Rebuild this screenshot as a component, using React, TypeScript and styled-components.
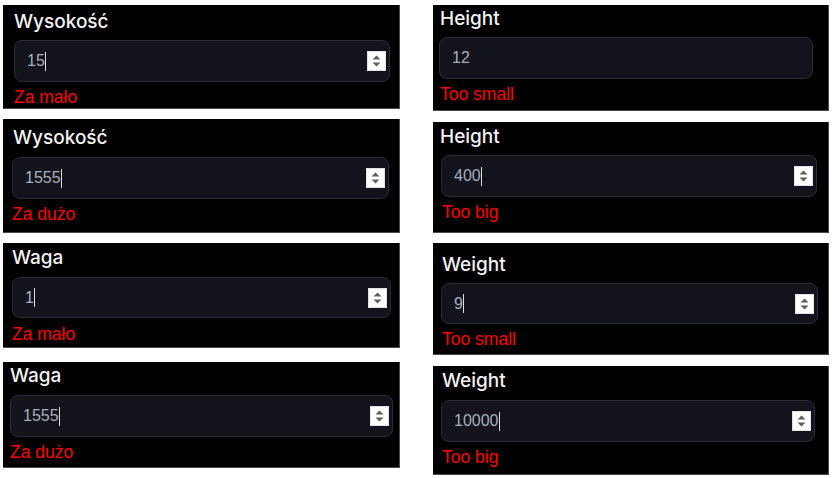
import React from "react";
import styled, { createGlobalStyle } from "styled-components";

const Global = createGlobalStyle`
  html, body { margin: 0; padding: 0; background: #ffffff; }
  body { font-family: Inter, "Liberation Sans", sans-serif; }
`;

const Page = styled.div`
  display: grid;
  grid-template-columns: 397px 396px;
  column-gap: 33px;
  padding: 5px 0 0 3px;
  align-items: start;
`;

const Column = styled.div`
  display: flex;
  flex-direction: column;
`;

const Panel = styled.section<{
  $h: number;
  $mt: number;
  $padL: number;
  $padT: number;
}>`
  box-sizing: border-box;
  height: ${(p) => p.$h}px;
  margin-top: ${(p) => p.$mt}px;
  padding: ${(p) => p.$padT}px 0 0 ${(p) => p.$padL}px;
  background: #000000;
  border-right: 1px solid #4a4a4a;
  border-bottom: 1px solid #4a4a4a;
  display: flex;
  flex-direction: column;
  align-items: flex-start;
  overflow: hidden;
`;

const Label = styled.div<{ $mb: number }>`
  font-family: Inter, "Noto Sans", sans-serif;
  font-size: 19px;
  font-weight: 500;
  line-height: 24px;
  color: #f2f2f2;
  margin-bottom: ${(p) => p.$mb}px;
`;

const Field = styled.div<{ $w: number; $h: number; $ml: number }>`
  box-sizing: border-box;
  width: ${(p) => p.$w}px;
  height: ${(p) => p.$h}px;
  margin-left: ${(p) => p.$ml}px;
  background: #13131b;
  border: 1px solid #2c2c38;
  border-radius: 8px;
  display: flex;
  align-items: center;
  padding: 0 3px 0 12px;
`;

const Value = styled.span`
  font-family: "Liberation Sans", Arial, sans-serif;
  font-size: 16px;
  color: #a7aebd;
  line-height: 20px;
`;

const Caret = styled.span`
  display: inline-block;
  width: 1px;
  height: 19px;
  background: #d8dce4;
  vertical-align: middle;
`;

const Grow = styled.div`
  flex: 1;
`;

const Spinner = styled.div`
  width: 19px;
  height: 20px;
  background: #ffffff;
  border: 1px solid #e2e2e2;
  box-sizing: border-box;
  display: flex;
  align-items: center;
  justify-content: center;
`;

const ErrorText = styled.div<{ $mt: number; $ml: number }>`
  font-family: "Liberation Sans", Arial, sans-serif;
  font-size: 17.5px;
  line-height: 20px;
  color: #ff0000;
  margin-top: ${(p) => p.$mt}px;
  margin-left: ${(p) => p.$ml}px;
`;

type Cfg = {
  label: string;
  value: string;
  error: string;
  h: number;
  mt: number;
  padL: number;
  padT: number;
  labelMb: number;
  fieldW: number;
  fieldH: number;
  fieldMl: number;
  errMt: number;
  errMl: number;
  spinner: boolean;
  caret: boolean;
};

const left: Cfg[] = [
  { label: "Wysokość", value: "15", error: "Za mało", h: 104, mt: 0, padL: 11, padT: 5, labelMb: 6, fieldW: 376, fieldH: 42, fieldMl: 0, errMt: 5, errMl: 0, spinner: true, caret: true },
  { label: "Wysokość", value: "1555", error: "Za dużo", h: 114, mt: 10, padL: 10, padT: 7, labelMb: 7, fieldW: 377, fieldH: 42, fieldMl: -1, errMt: 5, errMl: -1, spinner: true, caret: true },
  { label: "Waga", value: "1", error: "Za mało", h: 105, mt: 10, padL: 9, padT: 3, labelMb: 7, fieldW: 379, fieldH: 41, fieldMl: 0, errMt: 6, errMl: 0, spinner: true, caret: true },
  { label: "Waga", value: "1555", error: "Za dużo", h: 106, mt: 14, padL: 7, padT: 2, labelMb: 7, fieldW: 383, fieldH: 42, fieldMl: 0, errMt: 5, errMl: 0, spinner: true, caret: true },
];

const right: Cfg[] = [
  { label: "Height", value: "12", error: "Too small", h: 106, mt: 0, padL: 7, padT: 2, labelMb: 6, fieldW: 374, fieldH: 42, fieldMl: -1, errMt: 5, errMl: 0, spinner: false, caret: false },
  { label: "Height", value: "400", error: "Too big", h: 111, mt: 11, padL: 7, padT: 3, labelMb: 6, fieldW: 376, fieldH: 42, fieldMl: 1, errMt: 5, errMl: 2, spinner: true, caret: true },
  { label: "Weight", value: "9", error: "Too small", h: 112, mt: 10, padL: 9, padT: 10, labelMb: 6, fieldW: 377, fieldH: 41, fieldMl: -1, errMt: 5, errMl: 0, spinner: true, caret: true },
  { label: "Weight", value: "10000", error: "Too big", h: 109, mt: 11, padL: 9, padT: 3, labelMb: 7, fieldW: 374, fieldH: 42, fieldMl: -1, errMt: 5, errMl: 0, spinner: true, caret: true },
];

const SpinIcon = () => (
  <svg width="11" height="14" viewBox="0 0 11 14" aria-hidden="true">
    <path d="M5.5 1.5 L9.5 5.5 L1.5 5.5 Z" fill="#5e5e5e" />
    <path d="M1.5 8.5 L9.5 8.5 L5.5 12.5 Z" fill="#5e5e5e" />
  </svg>
);

const Card = ({ c }: { c: Cfg }) => (
  <Panel $h={c.h} $mt={c.mt} $padL={c.padL} $padT={c.padT}>
    <Label $mb={c.labelMb}>{c.label}</Label>
    <Field $w={c.fieldW} $h={c.fieldH} $ml={c.fieldMl} role="spinbutton">
      <Value>{c.value}</Value>
      {c.caret && <Caret />}
      <Grow />
      {c.spinner && (
        <Spinner>
          <SpinIcon />
        </Spinner>
      )}
    </Field>
    <ErrorText $mt={c.errMt} $ml={c.errMl}>{c.error}</ErrorText>
  </Panel>
);

export default function App() {
  return (
    <>
      <Global />
      <Page>
        <Column>
          {left.map((c, i) => (
            <Card key={i} c={c} />
          ))}
        </Column>
        <Column>
          {right.map((c, i) => (
            <Card key={i} c={c} />
          ))}
        </Column>
      </Page>
    </>
  );
}
